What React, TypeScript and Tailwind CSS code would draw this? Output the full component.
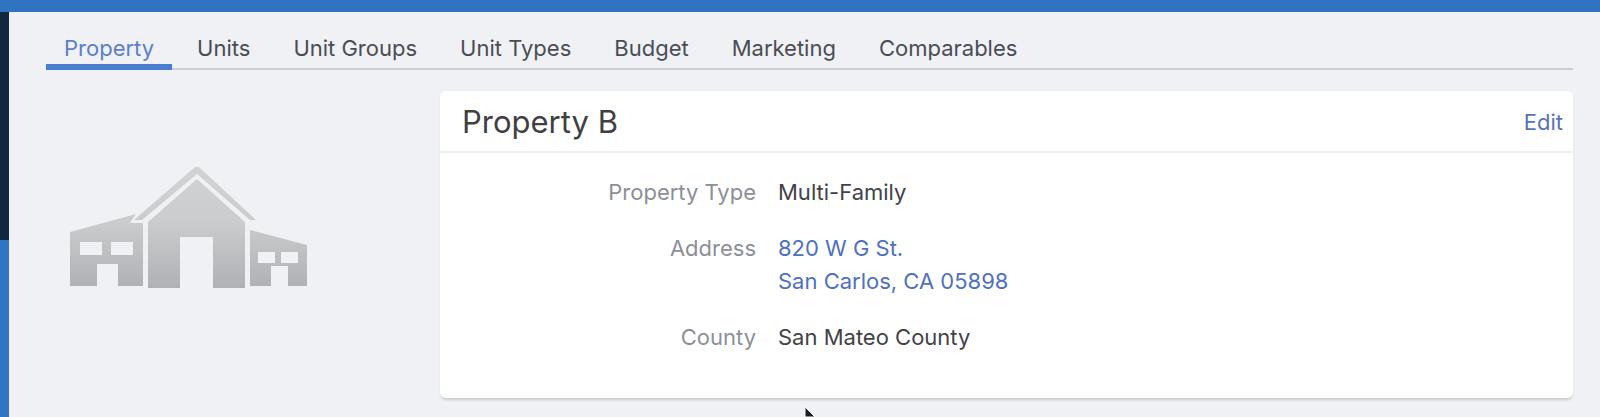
import React from 'react';

interface DetailRowProps {
  label: string;
  children: React.ReactNode;
}

const TABS = ['Property', 'Units', 'Unit Groups', 'Unit Types', 'Budget', 'Marketing', 'Comparables'];

const TabBar: React.FC<{ active: string }> = ({ active }) => (
  <nav className="flex gap-[7px] border-b-2 border-[#cccdd2] h-[58px]">
    {TABS.map(tab => (
      <a
        key={tab}
        href="#"
        className={`flex items-center px-[18px] pt-5 -mb-[2px] whitespace-nowrap ${
          tab === active ? 'text-[#5c7fc9] border-b-6 border-[#4a7dcf]' : 'text-[#4a4d55] border-b-6 border-transparent'
        }`}
      >
        {tab}
      </a>
    ))}
  </nav>
);

// Placeholder shown when the property has no photo
const PropertyPlaceholder = () => (
  <svg width="240" height="126" viewBox="0 0 240 126" aria-label="No property photo">
    <defs>
      <linearGradient id="house" gradientUnits="userSpaceOnUse" x1="0" y1="0" x2="0" y2="122">
        <stop offset="0" stopColor="#d2d3d5" />
        <stop offset="0.45" stopColor="#cbccce" />
        <stop offset="1" stopColor="#b0b1b4" />
      </linearGradient>
    </defs>
    <g fill="url(#house)" fillRule="evenodd">
      <path d="M1 66 L67 48 L61 57 H74 V120 H49 V98 H28 V120 H1 Z M11 76 H33 V89 H11 Z M42 76 H64 V89 H42 Z" />
      <path d="M65 54 L126 1 L130 1 L187 54 H181 L128 8 L73 54 Z" />
      <path d="M79 56 L128 13 L176 56 V122 H144 V71 H111 V122 H79 Z" />
      <path d="M181 64 L238 79 V120 H219 V100 H202 V120 H181 Z M189 86 H206 V97 H189 Z M212 86 H229 V97 H212 Z" />
    </g>
  </svg>
);

const DetailRow: React.FC<DetailRowProps> = ({ label, children }) => (
  <div className="flex gap-[22px]">
    <dt className="w-[316px] shrink-0 text-right text-[#8c8f98]">{label}</dt>
    <dd className="text-[#424347]">{children}</dd>
  </div>
);

const PropertyCard = () => (
  <section className="flex-1 min-w-0 bg-white rounded-md shadow-[0_3px_3px_-1px_rgba(0,0,0,0.16)]">
    <header className="h-[62px] flex items-center justify-between pt-[2px] pl-[22px] pr-[10px] border-b-2 border-[#eff0f3]">
      <h1 className="text-[31px] leading-[40px] text-[#3f4044]">Property B</h1>
      <button type="button" className="text-[#5874b8]">Edit</button>
    </header>
    <dl className="flex flex-col gap-[23px] pt-[23px] pb-[44px]">
      <DetailRow label="Property Type">Multi-Family</DetailRow>
      <DetailRow label="Address">
        <a href="#" className="text-[#5070c0]">
          820 W G St.
          <br />
          San Carlos, CA 05898
        </a>
      </DetailRow>
      <DetailRow label="County">San Mateo County</DetailRow>
    </dl>
  </section>
);

export default function App() {
  return (
    <div className="relative min-h-screen flex flex-col overflow-hidden bg-[#f0f1f4] font-['Inter',sans-serif] text-[22px] leading-[33px]">
      <div className="h-3 shrink-0 bg-[#2f73c1]" />
      <div className="flex flex-1">
        <aside className="w-[9px] shrink-0 flex flex-col bg-[#2e76c5]">
          <div className="h-[228px] bg-[#10283f]" />
        </aside>
        <main className="flex-1 min-w-0 pl-[37px] pr-[27px]">
          <TabBar active="Property" />
          <div className="flex pt-[21px]">
            <div className="w-[394px] shrink-0 pl-[23px] pt-[75px]">
              <PropertyPlaceholder />
            </div>
            <PropertyCard />
          </div>
        </main>
      </div>
      {/* mouse pointer */}
      <svg className="absolute left-1/2 bottom-0 ml-[4px]" width="12" height="10" viewBox="0 0 12 10">
        <path d="M1 0 L11 10 H1 Z" fill="#1c1c1e" stroke="#fff" />
      </svg>
    </div>
  );
}
